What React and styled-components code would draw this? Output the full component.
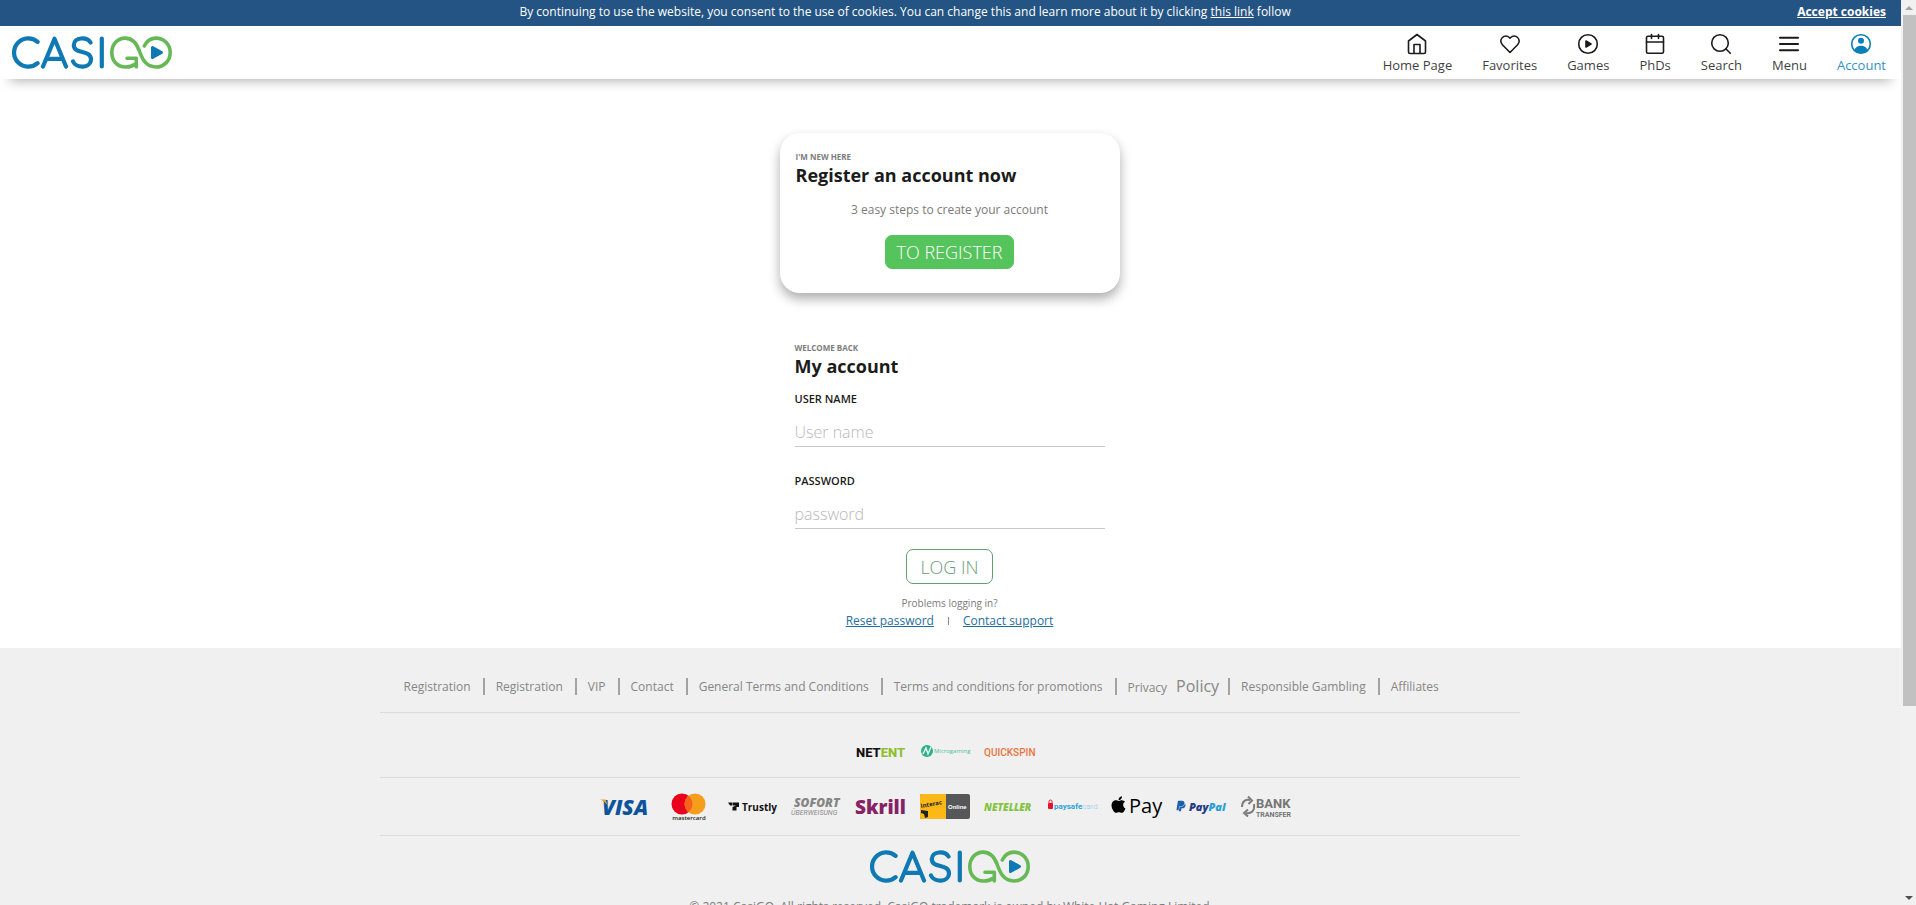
import React from "react";
import styled, { createGlobalStyle, css } from "styled-components";
import { FaApple, FaPaypal } from "react-icons/fa";

const GlobalStyle = createGlobalStyle`
  *, *::before, *::after { box-sizing: border-box; }
  body {
    margin: 0;
    background: #fff;
    color: #1b1b1b;
    font-family: "Open Sans", "Noto Sans", sans-serif;
    font-size: 12px;
    line-height: 16px;
  }
  a { color: inherit; }
  button, input { font-family: inherit; }
`;

const Shell = styled.div`
  display: flex;
  height: 100vh;
`;

const Page = styled.div`
  flex: 1;
  min-width: 0;
  overflow-y: auto;
  scrollbar-width: none;
`;

/* scroll bar */

const ScrollBar = styled.div`
  flex: none;
  width: 15px;
  display: flex;
  flex-direction: column;
  background: #f1f1f1;
`;

const ScrollArrow = styled.div`
  flex: none;
  height: 15px;
  display: flex;
  align-items: center;
  justify-content: center;
  &::before {
    content: "";
    border: 4px solid transparent;
    border-top-width: 0;
    border-bottom: 4px solid #a3a3a3;
    ${(p) => p.$down && css`
      border-bottom: 0;
      border-top: 4px solid #505050;
    `}
  }
`;

const ScrollTrack = styled.div`
  flex: 1;
  padding-left: 2px;
`;

const ScrollThumb = styled.div`
  height: 79%;
  background: #c1c1c1;
`;

/* cookie banner and header */

const CookieBar = styled.div`
  display: flex;
  align-items: center;
  height: 26px;
  padding: 0 15px 2px 13px;
  background: #245483;
  color: #fff;
`;

const CookieText = styled.p`
  flex: 1;
  margin: 0;
  text-align: center;
`;

const CookieAccept = styled.button`
  border: 0;
  padding: 0;
  background: none;
  color: #fff;
  font-size: 12px;
  font-weight: 700;
  line-height: 16px;
  text-decoration: underline;
`;

const Header = styled.header`
  display: flex;
  align-items: center;
  justify-content: space-between;
  height: 53px;
  padding: 0 15px 0 12px;
  box-shadow: 0 12px 12px -10px rgba(0, 0, 0, 0.3);
`;

const Nav = styled.nav`
  display: flex;
  gap: 30px;
`;

const navItem = css`
  display: flex;
  flex-direction: column;
  align-items: center;
  border: 0;
  padding: 0;
  background: none;
  color: ${(p) => (p.$active ? "#0a7fb8" : "#1b1b1b")};
  font-size: 13px;
  font-weight: 400;
  line-height: 18px;
  text-decoration: none;
`;

const NavLink = styled.a`${navItem}`;
const NavButton = styled.button`${navItem}`;

const NavLabel = styled.span`
  opacity: 0.85;
`;

const Icon = styled.svg`
  width: 24px;
  height: 24px;
  fill: none;
  stroke: currentColor;
  stroke-width: 1.6;
  stroke-linecap: round;
  stroke-linejoin: round;
`;

const LogoSvg = styled.svg`
  display: block;
  width: 160px;
  height: 33px;
`;

function Logo() {
  return (
    <LogoSvg viewBox="0 0 160 33" role="img" aria-label="CasiGO" fill="none" strokeLinecap="round" strokeLinejoin="round">
      <g stroke="#0e79b2" strokeWidth="4.2">
        <path d="M25.600 5.800 A14.200 14.200 0 1 0 25.600 27.200" />
        <path d="M31 30.500 L42.500 2.800 L54 30.500 M35.500 22.800 H49.500" />
        <path d="M78.500 6.500 C75 0.800 62 0.700 61.800 9 C61.800 19 79.200 13 79 23.500 C78.500 32.600 64 32.600 61 25.500" />
        <path d="M89.800 2.500 V30.500" />
      </g>
      <g stroke="#66b956" strokeWidth="3.6">
        <path d="M115 22.300 H124.300 V31 M122.500 28.500 C120 30.500 117 31 113.500 31 C105 31 99.800 24.500 99.800 16.500 C99.800 8.500 105.500 2.100 113 2.100 C121 2.100 124.500 7.500 127 14 C130 22.500 133.500 31 144 31 C152 31 158.200 24.800 158.200 16.500 C158.200 8.500 152 2.100 144 2.100 C138.500 2.100 134.500 5.500 132.300 10" />
      </g>
      <path d="M140.500 11.500 L149.500 16.500 L140.500 21.500 Z" fill="#0e79b2" stroke="#0e79b2" strokeWidth="3" />
    </LogoSvg>
  );
}

/* registration card and login form */

const Main = styled.main`
  display: flex;
  flex-direction: column;
  align-items: center;
  gap: 49px;
  padding: 54px 17px 19px 15px;
`;

const panel = css`
  width: 100%;
  max-width: 340px;
  display: flex;
  flex-direction: column;
`;

const RegisterCard = styled.section`
  ${panel}
  padding: 18px 16px 24px;
  border-radius: 20px;
  background: #fff;
  box-shadow: 0 6px 12px rgba(0, 0, 0, 0.32);
`;

const LoginForm = styled.form`
  ${panel}
  padding: 0 15px;
`;

const Eyebrow = styled.p`
  margin: 0;
  color: #7d7d7d;
  font-size: 8px;
  font-weight: 700;
  line-height: 12px;
`;

const Title = styled.h2`
  margin: 0;
  font-size: 18px;
  font-weight: 700;
  line-height: 24px;
`;

const Lead = styled.p`
  margin: 15px 0 17px;
  color: #7a7a7a;
  font-size: 12px;
  text-align: center;
`;

const ActionButton = styled.button`
  align-self: center;
  height: ${(p) => (p.$outline ? "35px" : "34px")};
  padding: 0 ${(p) => (p.$outline ? "13px" : "11px")};
  border: 1px solid ${(p) => (p.$outline ? "#5fa070" : "#56c45c")};
  border-radius: 7px;
  background: ${(p) => (p.$outline ? "#fff" : "#56c45c")};
  color: ${(p) => (p.$outline ? "#6d9b7c" : "#fff")};
  font-size: 18px;
  font-weight: 300;
  line-height: 24px;
`;

const Field = styled.div`
  display: flex;
  flex-direction: column;
  gap: 10px;
  margin-top: ${(p) => (p.$first ? "13px" : "26px")};
`;

const Label = styled.label`
  font-size: 11px;
  font-weight: 600;
`;

const TextInput = styled.input`
  width: 100%;
  height: 30px;
  padding: 0;
  border: 0;
  border-bottom: 1px solid #c8c8c8;
  border-radius: 0;
  background: none;
  outline: 0;
  color: #1b1b1b;
  font-size: 16px;
  font-weight: 300;
  &::placeholder { color: #b8b8b8; opacity: 1; }
`;

const Submit = styled.div`
  display: flex;
  justify-content: center;
  margin: 20px 0 12px;
`;

const HelpText = styled.p`
  margin: 0 0 3px;
  color: #7a7a7a;
  font-size: 10px;
  line-height: 14px;
  text-align: center;
`;

const HelpLinks = styled.div`
  display: flex;
  align-items: center;
  justify-content: center;
  gap: 14px;
  a { color: #1f6f9c; }
`;

const HelpDivider = styled.span`
  width: 1px;
  height: 8px;
  background: #8a8a8a;
`;

/* footer */

const Footer = styled.footer`
  display: flex;
  flex-direction: column;
  align-items: center;
  padding: 0 2px 40px 0;
  background: #f0f0f0;
  color: #868686;
`;

const FooterNav = styled.nav`
  width: 100%;
  max-width: 1140px;
  padding: 30px 24px 17px;
  border-bottom: 1px solid #dadada;
`;

const FooterList = styled.ul`
  display: flex;
  flex-wrap: wrap;
  align-items: center;
  margin: 0;
  padding: 0;
  list-style: none;
`;

const FooterItem = styled.li`
  display: flex;
  align-items: center;
  height: 17px;
  white-space: nowrap;
  & + &::before {
    content: "";
    width: 2px;
    height: 17px;
    margin: 0 11px 0 12px;
    background: #a2a2a2;
  }
  a { text-decoration: none; }
`;

const LargeWord = styled.span`
  margin: 0 -3px 0 9px;
  font-size: 16px;
`;

const BrandRow = styled.div`
  display: flex;
  align-items: center;
  justify-content: center;
  gap: 14px;
  width: 100%;
  max-width: 1140px;
  height: ${(p) => (p.$tall ? "65px" : "58px")};
  padding-right: 10px;
  padding-top: ${(p) => (p.$tall ? "14px" : "0")};
  border-bottom: 1px solid #dadada;
`;

const Brand = styled.svg`
  flex: none;
  width: 50px;
  height: 30px;
  overflow: visible;
`;

const FooterLogo = styled.div`
  padding: 14px 0 16px;
`;

const Copyright = styled.p`
  margin: 0;
  color: #7a7a7a;
`;

const navItems = [
  { label: "Home Page", icon: <path d="M3.500 9 L12 2.500 L20.500 9 V20 A1.500 1.500 0 0 1 19 21.500 H5 A1.500 1.500 0 0 1 3.500 20 Z M9 21 V12.500 H15 V21" /> },
  { label: "Favorites", icon: <path d="M12 20.500 L4.400 12.700 A4.900 4.900 0 0 1 4.400 5.500 A4.900 4.900 0 0 1 11.300 5.500 L12 6.200 L12.700 5.500 A4.900 4.900 0 0 1 19.600 5.500 A4.900 4.900 0 0 1 19.600 12.700 Z" /> },
  { label: "Games", icon: <><circle cx="12" cy="12" r="9.300" /><path d="M10 9 L15 12 L10 15 Z" fill="currentColor" /></> },
  { label: "PhDs", icon: <><rect x="3.500" y="4.300" width="17" height="17" rx="1.500" /><path d="M3.500 10 H20.500 M8.500 2.500 V6.500 M15.500 2.500 V6.500" /></> },
  { label: "Search", button: true, icon: <><circle cx="11" cy="11" r="8.300" /><path d="M17 17 L21.300 21.300" /></> },
  { label: "Menu", button: true, icon: <path d="M3 5.700 H21 M3 12 H21 M3 18.300 H21" strokeWidth="2.100" /> },
  { label: "Account", active: true, icon: <><circle cx="12" cy="12" r="9.300" /><circle cx="12" cy="8.700" r="3" fill="currentColor" stroke="none" /><path d="M5.500 18.500 C6 12 18 12 18.500 18.500 C15 22 9 22 5.500 18.500 Z" fill="currentColor" stroke="none" /></> },
];

const footerLinks = [
  "Registration",
  "Registration",
  "VIP",
  "Contact",
  "General Terms and Conditions",
  "Terms and conditions for promotions",
  <>Privacy<LargeWord>Policy</LargeWord></>,
  "Responsible Gambling",
  "Affiliates",
];

function Providers() {
  return (
    <BrandRow $tall>
      <Brand viewBox="0 0 50 30" role="img" aria-label="NetEnt">
        <text x="0" y="20" fontFamily="Roboto, sans-serif" fontWeight="800" fontSize="13" fill="#111">
          NET<tspan fill="#8cc02c">ENT</tspan>
        </text>
      </Brand>
      <Brand viewBox="0 0 50 30" role="img" aria-label="Microgaming">
        <circle cx="7" cy="14" r="6" fill="#28b585" />
        <path d="M3 17 L6 11 L8 17 L11 10" fill="none" stroke="#fff" strokeWidth="1.300" />
        <text x="14" y="16" fontFamily="Open Sans, sans-serif" fontSize="6" fill="#4cbf96">Microgaming</text>
      </Brand>
      <Brand viewBox="0 0 50 30" role="img" aria-label="Quickspin">
        <text x="0" y="19" fontFamily="Roboto, sans-serif" fontWeight="500" fontSize="10" fill="#ea7440">QUICKSPIN</text>
      </Brand>
    </BrandRow>
  );
}

function Payments() {
  return (
    <BrandRow>
      <Brand viewBox="0 0 50 30" role="img" aria-label="Visa">
        <text x="2" y="23" fontFamily="Open Sans, sans-serif" fontStyle="italic" fontWeight="800" fontSize="21" fill="#0e549c">VISA</text>
        <path d="M0 7.500 H5.500 L8 14 Q5 9 0 7.500 Z" fill="#efa020" />
      </Brand>
      <Brand viewBox="0 0 50 30" role="img" aria-label="Mastercard">
        <circle cx="18" cy="12" r="10.500" fill="#e8001c" />
        <circle cx="31" cy="12" r="10.500" fill="#f59e1b" />
        <path d="M24.500 3.800 A10.500 10.500 0 0 1 24.500 20.200 A10.500 10.500 0 0 1 24.500 3.800 Z" fill="#f8611a" />
        <text x="25" y="28" textAnchor="middle" fontFamily="Open Sans, sans-serif" fontWeight="600" fontSize="6" fill="#222">mastercard</text>
      </Brand>
      <Brand viewBox="0 0 50 30" role="img" aria-label="Trustly">
        <path d="M0 10.500 H4.500 V13.500 H2 Z M5 10.500 H11 V15 H8.500 V18.500 H4.500 V15 L8 13.500 H5 Z" fill="#111" />
        <text x="14" y="19" fontFamily="Open Sans, sans-serif" fontWeight="700" fontSize="10" fill="#111">Trustly</text>
      </Brand>
      <Brand viewBox="0 0 50 30" role="img" aria-label="Sofort Überweisung">
        <text x="2" y="15" fontFamily="Open Sans, sans-serif" fontStyle="italic" fontWeight="800" fontSize="12" fill="#858585">SOFORT</text>
        <text x="-1" y="23" fontFamily="Roboto, sans-serif" fontStyle="italic" fontSize="7" fill="#8a8a8a">ÜBERWEISUNG</text>
      </Brand>
      <Brand viewBox="0 0 50 30" role="img" aria-label="Skrill">
        <text x="-1" y="22" fontFamily="Open Sans, sans-serif" fontWeight="800" fontSize="19" fill="#862165">Skrill</text>
      </Brand>
      <Brand viewBox="0 0 50 30" role="img" aria-label="Interac Online">
        <rect x="0" y="2" width="50" height="25" rx="2" fill="#555759" />
        <path d="M2 2 H26 V27 H2 A2 2 0 0 1 0 25 V4 A2 2 0 0 1 2 2 Z" fill="#fcb817" />
        <path d="M1 18 L8 19 V25 L5 26 L4 22 L1 21 Z" fill="#222" />
        <text x="1" y="16" transform="rotate(-10 1 16)" fontFamily="Open Sans, sans-serif" fontWeight="700" fontSize="6" fill="#222">Interac</text>
        <text x="28" y="17" fontFamily="Liberation Sans, sans-serif" fontWeight="700" fontSize="6" fill="#fff">Online</text>
      </Brand>
      <Brand viewBox="0 0 50 30" role="img" aria-label="Neteller">
        <text x="0" y="19" fontFamily="Open Sans, sans-serif" fontStyle="italic" fontWeight="800" fontSize="10" fill="#84c440">NETELLER</text>
      </Brand>
      <Brand viewBox="0 0 50 30" role="img" aria-label="paysafecard">
        <rect x="0" y="11" width="5" height="6" rx="1" fill="#e2112d" />
        <path d="M1 11 V9.500 A1.500 1.500 0 0 1 4 9.500 V11" fill="none" stroke="#e2112d" />
        <text x="6" y="17" fontFamily="Roboto, sans-serif" fontWeight="700" fontSize="8" fill="#2ba3d8">
          paysafe<tspan fontWeight="300" fill="#8cc8e4">card</tspan>
        </text>
      </Brand>
      <Brand viewBox="0 0 50 30" role="img" aria-label="Apple Pay">
        <FaApple x="-3" y="3" size={19} color="#000" />
        <text x="17" y="21" fontFamily="Open Sans, sans-serif" fontSize="20" fill="#000">Pay</text>
      </Brand>
      <Brand viewBox="0 0 50 30" role="img" aria-label="PayPal">
        <FaPaypal x="-1" y="8" size={12} color="#1c5fa8" />
        <text x="13" y="19" fontFamily="Open Sans, sans-serif" fontStyle="italic" fontWeight="800" fontSize="11" fill="#253b80">
          Pay<tspan fill="#2b9fd9">Pal</tspan>
        </text>
      </Brand>
      <Brand viewBox="0 0 50 30" role="img" aria-label="Bank transfer">
        <path d="M2 15 C2 9 6 7 10 8 M8 4.500 L12 8.500 L8.500 12 M14 12 C15 19 11 22 6 21 M8 17.500 L4 21 L8 24.500" fill="none" stroke="#7d7d7d" strokeWidth="2" />
        <text x="16" y="16" fontFamily="Roboto, sans-serif" fontWeight="700" fontSize="13" fill="#757575">BANK</text>
        <text x="16" y="25" fontFamily="Roboto, sans-serif" fontWeight="700" fontSize="7" fill="#757575">TRANSFER</text>
      </Brand>
    </BrandRow>
  );
}

export default function App() {
  return (
    <>
      <GlobalStyle />
      <Shell>
        <Page>
          <CookieBar>
            <CookieText>
              By continuing to use the website, you consent to the use of cookies. You can change this and learn more about it by clicking <a href="#cookies">this link</a> follow
            </CookieText>
            <CookieAccept type="button">Accept cookies</CookieAccept>
          </CookieBar>
          <Header>
            <Logo />
            <Nav>
              {navItems.map(({ label, icon, active, button }) => {
                const content = (
                  <>
                    <Icon viewBox="0 0 24 24" aria-hidden="true">{icon}</Icon>
                    <NavLabel>{label}</NavLabel>
                  </>
                );
                return button ? (
                  <NavButton key={label} type="button">{content}</NavButton>
                ) : (
                  <NavLink key={label} href="#" $active={active}>{content}</NavLink>
                );
              })}
            </Nav>
          </Header>

          <Main>
            <RegisterCard>
              <Eyebrow>I'M NEW HERE</Eyebrow>
              <Title>Register an account now</Title>
              <Lead>3 easy steps to create your account</Lead>
              <ActionButton type="button">TO REGISTER</ActionButton>
            </RegisterCard>

            <LoginForm>
              <Eyebrow>WELCOME BACK</Eyebrow>
              <Title>My account</Title>
              <Field $first>
                <Label htmlFor="username">USER NAME</Label>
                <TextInput id="username" type="text" placeholder="User name" />
              </Field>
              <Field>
                <Label htmlFor="password">PASSWORD</Label>
                <TextInput id="password" type="password" placeholder="password" />
              </Field>
              <Submit>
                <ActionButton type="button" $outline>LOG IN</ActionButton>
              </Submit>
              <HelpText>Problems logging in?</HelpText>
              <HelpLinks>
                <a href="#reset">Reset password</a>
                <HelpDivider />
                <a href="#support">Contact support</a>
              </HelpLinks>
            </LoginForm>
          </Main>

          <Footer>
            <FooterNav>
              <FooterList>
                {footerLinks.map((link, i) => (
                  <FooterItem key={i}><a href="#">{link}</a></FooterItem>
                ))}
              </FooterList>
            </FooterNav>
            <Providers />
            <Payments />
            <FooterLogo><Logo /></FooterLogo>
            <Copyright>© 2021 CasiGO. All rights reserved. CasiGO trademark is owned by White Hat Gaming Limited</Copyright>
          </Footer>
        </Page>
        <ScrollBar aria-hidden="true">
          <ScrollArrow />
          <ScrollTrack><ScrollThumb /></ScrollTrack>
          <ScrollArrow $down />
        </ScrollBar>
      </Shell>
    </>
  );
}
